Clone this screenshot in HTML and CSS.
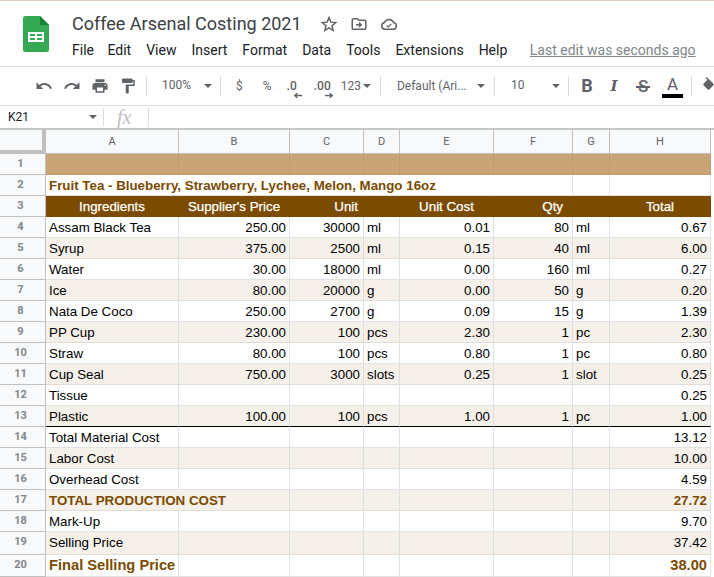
FILE: index.html
```html
<!DOCTYPE html>
<html lang="en">
<head>
<meta charset="utf-8">
<title>Coffee Arsenal Costing 2021</title>
<link rel="stylesheet" href="styles.css">
</head>
<body>
<div class="app">
  <header class="titlebar">
    <svg class="logo" width="26" height="36" viewBox="0 0 26 36"><path d="M2.500 0H17l9 9v24.500a2.500 2.500 0 0 1-2.500 2.500h-21A2.500 2.500 0 0 1 0 33.500v-31A2.500 2.500 0 0 1 2.500 0z" fill="#34a853"/><path d="M17 0l9 9h-9z" fill="#188038"/><path d="M5 16h16v10H5z" fill="#fff"/><path d="M7 18h5v2H7zM14 18h5v2h-5zM7 22h5v2H7zM14 22h5v2h-5z" fill="#34a853"/></svg>
    <div class="titleinfo">
      <div class="titlerow">
        <span class="doctitle">Coffee Arsenal Costing 2021</span>
        <svg class="ticon" width="18" height="18" viewBox="0 0 24 24"><path d="M12 3.500l2.500 6 6.500.5-5 4.300 1.500 6.400L12 17.300l-5.500 3.400L8 14.300 3 10l6.500-.5z" fill="none" stroke="#5f6368" stroke-width="2"/></svg>
        <svg class="ticon" width="18" height="18" viewBox="0 0 24 24"><path d="M3 6.500a1.500 1.500 0 0 1 1.500-1.500H10l2 2h7.500A1.500 1.500 0 0 1 21 8.500v9a1.500 1.500 0 0 1-1.500 1.500h-15A1.500 1.500 0 0 1 3 17.500z" fill="none" stroke="#5f6368" stroke-width="2"/><path d="M8 13h6M12 10l3 3-3 3" fill="none" stroke="#5f6368" stroke-width="2"/></svg>
        <svg class="ticon" width="18" height="18" viewBox="0 0 24 24"><path d="M6.500 19a4.500 4.500 0 0 1-.6-8.900A6.500 6.500 0 0 1 18 10.100 4.500 4.500 0 0 1 18 19z" fill="none" stroke="#5f6368" stroke-width="2"/><path d="M9 14l2 2 4-4" fill="none" stroke="#5f6368" stroke-width="1.500"/></svg>
      </div>
      <nav class="menubar">
        <span class="m-file">File</span><span>Edit</span><span>View</span><span>Insert</span><span>Format</span><span>Data</span><span>Tools</span><span>Extensions</span><span>Help</span>
        <a class="lastedit">Last edit was seconds ago</a>
      </nav>
    </div>
  </header>

  <div class="toolbar">
    <svg class="tool t-undo" width="18" height="18" viewBox="0 0 24 24"><path d="M12.500 8c-2.650 0-5.050 1-6.900 2.600L2 7v9h9l-3.620-3.620c1.390-1.160 3.160-1.880 5.120-1.880 3.540 0 6.550 2.310 7.600 5.500l2.370-.78C21.080 11.030 17.150 8 12.500 8z" fill="#5f6368"/></svg>
    <svg class="tool t-redo" width="18" height="18" viewBox="0 0 24 24"><path d="M18.400 10.600C16.550 9 14.150 8 11.500 8c-4.650 0-8.580 3.030-9.960 7.220L3.900 16c1.050-3.190 4.050-5.500 7.600-5.500 1.950 0 3.730.72 5.120 1.880L13 16h9V7z" fill="#5f6368"/></svg>
    <svg class="tool t-print" width="18" height="18" viewBox="0 0 24 24"><path d="M19 8H5c-1.660 0-3 1.340-3 3v6h4v4h12v-4h4v-6c0-1.660-1.340-3-3-3zm-3 11H8v-5h8v5zm3-7c-.55 0-1-.45-1-1s.45-1 1-1 1 .45 1 1-.45 1-1 1zm-1-9H6v4h12V3z" fill="#5f6368"/></svg>
    <svg class="tool t-paint" width="18" height="18" viewBox="0 0 24 24"><path d="M18 4V3c0-.55-.45-1-1-1H5c-.55 0-1 .45-1 1v4c0 .55.45 1 1 1h12c.55 0 1-.45 1-1V6h1v4H9v11c0 .55.45 1 1 1h2c.55 0 1-.45 1-1v-9h8V4h-3z" fill="#5f6368"/></svg>
    <i class="sep s1"></i>
    <span class="tool-text zoomval">100%</span><i class="caret c-zoom"></i>
    <i class="sep s2"></i>
    <span class="tool-text dollar">$</span>
    <span class="tool-text percent">%</span>
    <span class="tool-text dec1">.0<svg class="arrow arrow-l" width="8" height="5" viewBox="0 0 8 5"><path d="M1 2.500h7M3.500 0L.8 2.500 3.500 5" fill="none" stroke="#5f6368" stroke-width="1.300"/></svg></span>
    <span class="tool-text dec2">.00<svg class="arrow arrow-r" width="8" height="5" viewBox="0 0 8 5"><path d="M0 2.500h7M4.500 0l2.700 2.500L4.500 5" fill="none" stroke="#5f6368" stroke-width="1.300"/></svg></span>
    <span class="tool-text fmt">123</span><i class="caret c-fmt"></i>
    <i class="sep s3"></i>
    <span class="tool-text fontname">Default (Ari...</span><i class="caret c-font"></i>
    <i class="sep s4"></i>
    <span class="tool-text fontsize">10</span><i class="caret c-size"></i>
    <i class="sep s5"></i>
    <span class="glyph bold">B</span>
    <span class="glyph italic">I</span>
    <span class="glyph strike">S</span>
    <span class="textcolor">A</span>
    <i class="sep s6"></i>
    <svg class="tool t-fill" width="18" height="18" viewBox="0 0 24 24"><path d="M16.560 8.940L7.620 0 6.210 1.410l2.380 2.380-5.150 5.150c-.59.590-.59 1.540 0 2.120l5.500 5.500c.29.290.68.440 1.060.44s.77-.15 1.060-.44l5.500-5.500c.59-.58.590-1.530 0-2.120z" fill="#5f6368"/></svg>
  </div>

  <div class="formulabar">
    <span class="namebox">K21</span><i class="caret c-name"></i>
    <i class="fsep"></i>
    <span class="fx">fx</span>
    <i class="fsep"></i>
  </div>

  <div class="sheet">
    <div class="corner"></div>
    <div class="ch">A</div><div class="ch">B</div><div class="ch">C</div><div class="ch">D</div><div class="ch">E</div><div class="ch">F</div><div class="ch">G</div><div class="ch">H</div>

    <div class="rh">1</div>
    <div class="c tan"></div><div class="c tan"></div><div class="c tan"></div><div class="c tan"></div><div class="c tan"></div><div class="c tan"></div><div class="c tan"></div><div class="c tan"></div>

    <div class="rh">2</div>
    <div class="c title-cell over">Fruit Tea - Blueberry, Strawberry, Lychee, Melon, Mango 16oz</div><div class="c noline"></div><div class="c noline"></div><div class="c noline"></div><div class="c noline"></div><div class="c"></div><div class="c"></div><div class="c"></div>

    <div class="rh">3</div>
    <div class="c hd ctr">Ingredients</div><div class="c hd ctr">Supplier's Price</div><div class="c hd r hd-unit">Unit</div><div class="c hd"></div><div class="c hd ctr">Unit Cost</div><div class="c hd r hd-qty">Qty</div><div class="c hd"></div><div class="c hd ctr">Total</div>

    <div class="rh">4</div>
    <div class="c">Assam Black Tea</div><div class="c r">250.00</div><div class="c r">30000</div><div class="c">ml</div><div class="c r">0.01</div><div class="c r">80</div><div class="c">ml</div><div class="c r">0.67</div>

    <div class="rh">5</div>
    <div class="c alt">Syrup</div><div class="c alt r">375.00</div><div class="c alt r">2500</div><div class="c alt">ml</div><div class="c alt r">0.15</div><div class="c alt r">40</div><div class="c alt">ml</div><div class="c alt r">6.00</div>

    <div class="rh">6</div>
    <div class="c">Water</div><div class="c r">30.00</div><div class="c r">18000</div><div class="c">ml</div><div class="c r">0.00</div><div class="c r">160</div><div class="c">ml</div><div class="c r">0.27</div>

    <div class="rh">7</div>
    <div class="c alt">Ice</div><div class="c alt r">80.00</div><div class="c alt r">20000</div><div class="c alt">g</div><div class="c alt r">0.00</div><div class="c alt r">50</div><div class="c alt">g</div><div class="c alt r">0.20</div>

    <div class="rh">8</div>
    <div class="c">Nata De Coco</div><div class="c r">250.00</div><div class="c r">2700</div><div class="c">g</div><div class="c r">0.09</div><div class="c r">15</div><div class="c">g</div><div class="c r">1.39</div>

    <div class="rh">9</div>
    <div class="c alt">PP Cup</div><div class="c alt r">230.00</div><div class="c alt r">100</div><div class="c alt">pcs</div><div class="c alt r">2.30</div><div class="c alt r">1</div><div class="c alt">pc</div><div class="c alt r">2.30</div>

    <div class="rh">10</div>
    <div class="c">Straw</div><div class="c r">80.00</div><div class="c r">100</div><div class="c">pcs</div><div class="c r">0.80</div><div class="c r">1</div><div class="c">pc</div><div class="c r">0.80</div>

    <div class="rh">11</div>
    <div class="c alt">Cup Seal</div><div class="c alt r">750.00</div><div class="c alt r">3000</div><div class="c alt">slots</div><div class="c alt r">0.25</div><div class="c alt r">1</div><div class="c alt">slot</div><div class="c alt r">0.25</div>

    <div class="rh">12</div>
    <div class="c">Tissue</div><div class="c"></div><div class="c"></div><div class="c"></div><div class="c"></div><div class="c"></div><div class="c"></div><div class="c r">0.25</div>

    <div class="rh">13</div>
    <div class="c alt line">Plastic</div><div class="c alt line r">100.00</div><div class="c alt line r">100</div><div class="c alt line">pcs</div><div class="c alt line r">1.00</div><div class="c alt line r">1</div><div class="c alt line">pc</div><div class="c alt line r">1.00</div>

    <div class="rh">14</div>
    <div class="c">Total Material Cost</div><div class="c"></div><div class="c"></div><div class="c"></div><div class="c"></div><div class="c"></div><div class="c"></div><div class="c r">13.12</div>

    <div class="rh">15</div>
    <div class="c alt">Labor Cost</div><div class="c alt"></div><div class="c alt"></div><div class="c alt"></div><div class="c alt"></div><div class="c alt"></div><div class="c alt"></div><div class="c alt r">10.00</div>

    <div class="rh">16</div>
    <div class="c">Overhead Cost</div><div class="c"></div><div class="c"></div><div class="c"></div><div class="c"></div><div class="c"></div><div class="c"></div><div class="c r">4.59</div>

    <div class="rh">17</div>
    <div class="c alt strong over">TOTAL PRODUCTION COST</div><div class="c alt"></div><div class="c alt"></div><div class="c alt"></div><div class="c alt"></div><div class="c alt"></div><div class="c alt"></div><div class="c alt strong r">27.72</div>

    <div class="rh">18</div>
    <div class="c">Mark-Up</div><div class="c"></div><div class="c"></div><div class="c"></div><div class="c"></div><div class="c"></div><div class="c"></div><div class="c r">9.70</div>

    <div class="rh">19</div>
    <div class="c alt">Selling Price</div><div class="c alt"></div><div class="c alt"></div><div class="c alt"></div><div class="c alt"></div><div class="c alt"></div><div class="c alt"></div><div class="c alt r">37.42</div>

    <div class="rh">20</div>
    <div class="c final">Final Selling Price</div><div class="c"></div><div class="c"></div><div class="c"></div><div class="c"></div><div class="c"></div><div class="c"></div><div class="c final r">38.00</div>
  </div>
</div>
</body>
</html>
```
FILE: styles.css
```css
* { box-sizing: border-box; }
html, body { margin: 0; padding: 0; height: 100%; overflow: hidden; background: #fff; }
i { display: block; font-style: normal; }
.app { width: 714px; height: 577px; overflow: hidden; border-top: 1px solid #e6c9c0; font-family: Roboto, sans-serif; color: #3c4043; }

.titlebar { height: 66px; display: flex; align-items: flex-start; padding: 15px 0 0 23px; border-bottom: 1px solid #dadce0; }
.logo { flex: none; }
.titleinfo { margin-left: 23px; margin-top: -4px; }
.titlerow { display: flex; align-items: center; height: 24px; gap: 12px; }
.doctitle { font-size: 18px; line-height: 24px; color: #3c4043; margin-right: 6px; }
.menubar { display: flex; align-items: center; height: 24px; margin-top: 2px; font-size: 14px; gap: 15px; color: #202124; white-space: nowrap; }
.m-file { margin-right: -1.5px; }
.lastedit { margin-left: 7.5px; color: #80868b; text-decoration: underline; }

.toolbar { height: 39px; display: flex; align-items: center; padding-left: 35px; border-bottom: 1px solid #dadce0; font-size: 12px; white-space: nowrap; }
.tool { flex: none; }
.t-redo, .t-print, .t-paint { margin-left: 10px; }
.tool-text { flex: none; color: #5f6368; font-size: 12px; }
.sep { flex: none; width: 1px; height: 20px; background: #dadce0; }
.caret { flex: none; width: 0; height: 0; border-left: 4px solid transparent; border-right: 4px solid transparent; border-top: 4px solid #5f6368; }
.s1 { margin-left: 9px; }
.zoomval { margin-left: 15px; margin-bottom: 2px; }
.c-zoom { margin-left: 13px; }
.s2 { margin-left: 8px; }
.dollar { margin-left: 15px; }
.percent { margin-left: 20px; }
.dec1 { margin-left: 15px; position: relative; font-weight: 500; }
.dec2 { margin-left: 17px; position: relative; font-weight: 500; }
.arrow { position: absolute; bottom: -5px; }
.arrow-l { right: -5px; }
.arrow-r { right: -2px; }
.fmt { margin-left: 10px; }
.c-fmt { margin-left: 2px; }
.s3 { margin-left: 9px; }
.fontname { margin-left: 16px; width: 70px; overflow: hidden; }
.c-font { margin-left: 10px; }
.s4 { margin-left: 9px; }
.fontsize { margin-left: 16px; margin-bottom: 2px; }
.c-size { margin-left: 27.6px; }
.s5 { margin-left: 8px; }
.glyph { flex: none; width: 20px; text-align: center; color: #5f6368; font-size: 18px; line-height: 20px; }
.bold { font-family: Roboto, sans-serif; font-weight: 700; margin-left: 8px; }
.italic { font-family: "DejaVu Serif", serif; font-size: 15px; font-weight: 700; font-style: italic; margin-left: 7px; }
.strike { position: relative; font-family: Roboto, sans-serif; font-size: 17px; font-weight: 500; margin-left: 9px; }
.strike::after { content: ""; position: absolute; left: 3px; top: 10px; width: 14px; height: 2px; background: #5f6368; }
.textcolor { flex: none; width: 21px; margin-left: 9px; height: 24px; border-bottom: 4px solid #000; text-align: center; color: #5f6368; font-size: 17px; line-height: 20px; }
.s6 { margin-left: 8px; }
.t-fill { margin-left: 9px; }

.formulabar { height: 24px; display: flex; align-items: center; padding-left: 8px; border-bottom: 2px solid #c4c7c5; font-size: 12px; color: #202124; }
.namebox { width: 81px; }
.c-name { margin-right: 6px; }
.fsep { flex: none; width: 1px; height: 18px; background: #dadce0; }
.fx { flex: none; width: 44px; padding-left: 13px; font: italic 20px "Liberation Serif", serif; color: #c0c0c0; }

.sheet { display: grid; grid-template-columns: 46px 133px 111px 74px 36px 94px 79px 37px 101px; grid-template-rows: 24px repeat(18, 21px) 23px; font-family: "Liberation Sans", sans-serif; font-size: 13.33px; color: #000; }
.corner { background: #f8f9fa; border-right: 4px solid #c0c0c0; border-bottom: 4px solid #c0c0c0; }
.ch { background: #f8f9fa; border-right: 1px solid #c0c0c0; border-bottom: 1px solid #c0c0c0; font: 11px/23px Roboto, sans-serif; color: #5f6368; text-align: center; }
.rh { background: #f8f9fa; border-right: 1px solid #c0c0c0; border-bottom: 1px solid #c0c0c0; font: 700 11px/20px Roboto, sans-serif; color: #80868b; text-align: center; padding-right: 4px; }
.c { border-right: 1px solid #e2e2e2; border-bottom: 1px solid #e2e2e2; padding: 0 3px; line-height: 22px; white-space: nowrap; overflow: hidden; }
.r { text-align: right; }
.ctr { text-align: center; }
.tan { background: #c9a477; border-color: #c19b6d; }
.hd { background: #7b4b00; border-color: #7b4b00; color: #fff; -webkit-text-stroke: 0.25px #fff; }
.hd-unit { padding-right: 5px; }
.hd-qty { padding-right: 9px; }
.alt { background: #f6f0ea; border-color: #e0dcd7; }
.title-cell { font-weight: 700; color: #7b4b00; }
.noline { border-right-color: transparent; }
.over { overflow: visible; position: relative; z-index: 1; border-right-color: transparent; }
.line { border-bottom: 1px solid #000; }
.strong { font-weight: 700; color: #7b4b00; }
.final { font-weight: 700; color: #7b4b00; font-size: 14.67px; line-height: 21px; }
```
